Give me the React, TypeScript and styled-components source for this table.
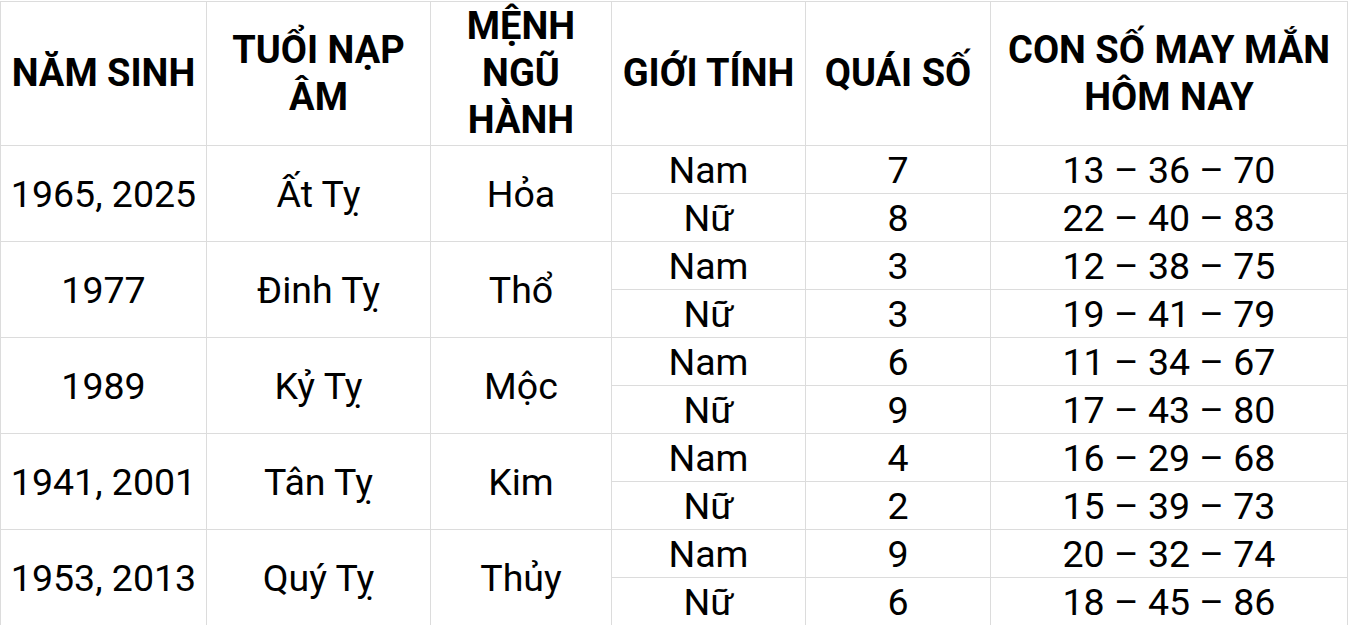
import React from "react";
import styled, { createGlobalStyle } from "styled-components";

const GlobalStyle = createGlobalStyle`
  html, body {
    margin: 0;
    padding: 0;
    background: #fff;
  }
  body {
    font-family: Roboto, "Noto Sans", "Liberation Sans", sans-serif;
    color: #000;
  }
`;

const Sheet = styled.div`
  padding-top: 1px;
`;

const Table = styled.table`
  width: 1347px;
  table-layout: fixed;
  border-collapse: collapse;
  border-left: 1px solid #a3a3a3;
`;

const HeadCell = styled.th`
  height: 143px;
  padding: 0 2px;
  border: 1px solid #dcdcdc;
  font-size: 38px;
  font-weight: 700;
  line-height: 47px;
  text-align: center;
  vertical-align: middle;
`;

const Cell = styled.td`
  height: 46px;
  padding: 1px 2px 0;
  border: 1px solid #dcdcdc;
  font-size: 37.5px;
  font-weight: 400;
  line-height: 46px;
  text-align: center;
  vertical-align: middle;
  white-space: nowrap;
`;

const colWidths = [206, 224, 181, 194, 185, 357];

type Entry = {
  years: string;
  age: string;
  element: string;
  male: { num: string; lucky: string };
  female: { num: string; lucky: string };
};

const data: Entry[] = [
  {
    years: "1965, 2025",
    age: "Ất Tỵ",
    element: "Hỏa",
    male: { num: "7", lucky: "13 – 36 – 70" },
    female: { num: "8", lucky: "22 – 40 – 83" },
  },
  {
    years: "1977",
    age: "Đinh Tỵ",
    element: "Thổ",
    male: { num: "3", lucky: "12 – 38 – 75" },
    female: { num: "3", lucky: "19 – 41 – 79" },
  },
  {
    years: "1989",
    age: "Kỷ Tỵ",
    element: "Mộc",
    male: { num: "6", lucky: "11 – 34 – 67" },
    female: { num: "9", lucky: "17 – 43 – 80" },
  },
  {
    years: "1941, 2001",
    age: "Tân Tỵ",
    element: "Kim",
    male: { num: "4", lucky: "16 – 29 – 68" },
    female: { num: "2", lucky: "15 – 39 – 73" },
  },
  {
    years: "1953, 2013",
    age: "Quý Tỵ",
    element: "Thủy",
    male: { num: "9", lucky: "20 – 32 – 74" },
    female: { num: "6", lucky: "18 – 45 – 86" },
  },
];

export default function App() {
  return (
    <Sheet>
      <GlobalStyle />
      <Table>
        <colgroup>
          {colWidths.map((w, i) => (
            <col key={i} style={{ width: w }} />
          ))}
        </colgroup>
        <thead>
          <tr>
            <HeadCell>NĂM SINH</HeadCell>
            <HeadCell>
              TUỔI NẠP
              <br />
              ÂM
            </HeadCell>
            <HeadCell>
              MỆNH
              <br />
              NGŨ
              <br />
              HÀNH
            </HeadCell>
            <HeadCell>GIỚI TÍNH</HeadCell>
            <HeadCell>QUÁI SỐ</HeadCell>
            <HeadCell>
              CON SỐ MAY MẮN
              <br />
              HÔM NAY
            </HeadCell>
          </tr>
        </thead>
        <tbody>
          {data.map((d) => (
            <React.Fragment key={d.years}>
              <tr>
                <Cell rowSpan={2}>{d.years}</Cell>
                <Cell rowSpan={2}>{d.age}</Cell>
                <Cell rowSpan={2}>{d.element}</Cell>
                <Cell>Nam</Cell>
                <Cell>{d.male.num}</Cell>
                <Cell>{d.male.lucky}</Cell>
              </tr>
              <tr>
                <Cell>Nữ</Cell>
                <Cell>{d.female.num}</Cell>
                <Cell>{d.female.lucky}</Cell>
              </tr>
            </React.Fragment>
          ))}
        </tbody>
      </Table>
    </Sheet>
  );
}
